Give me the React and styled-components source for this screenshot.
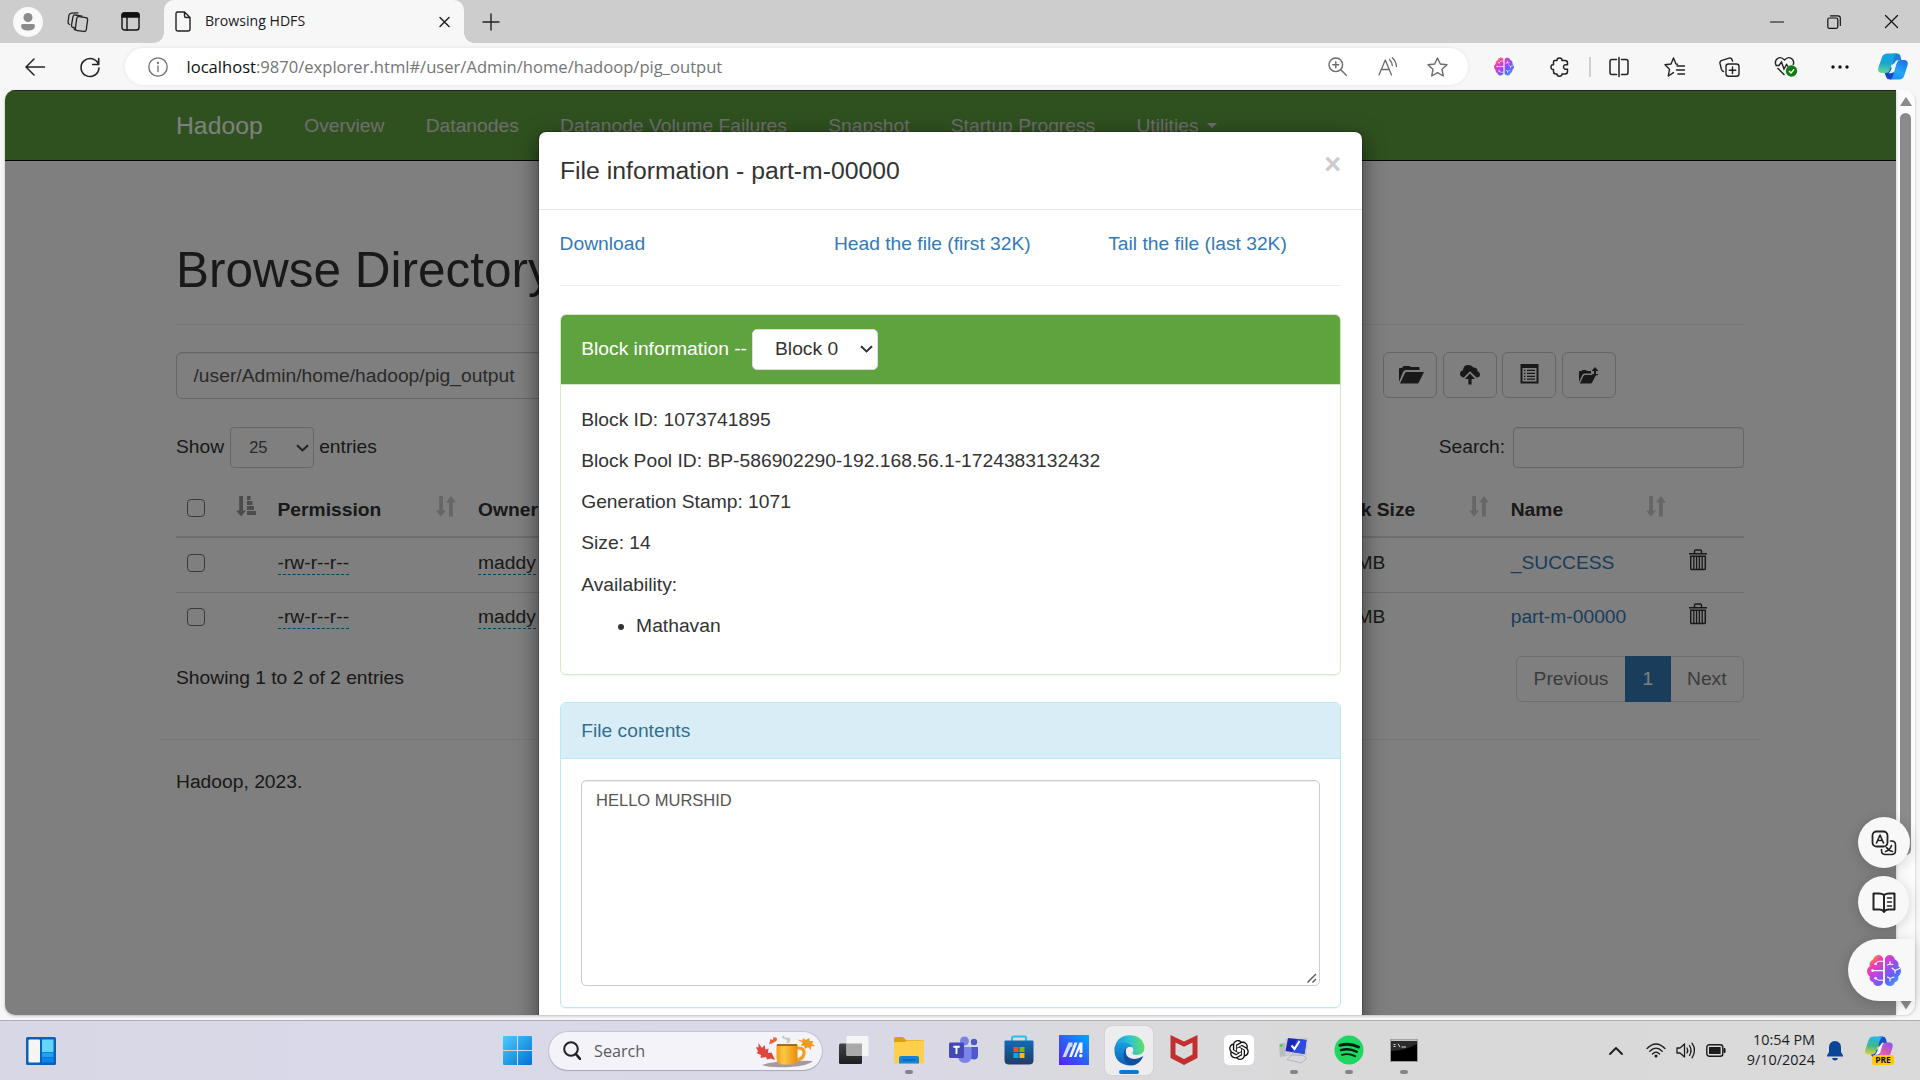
import React from "react";
import styled, { createGlobalStyle, css } from "styled-components";
import { RiOpenaiFill } from "react-icons/ri";

const Global = createGlobalStyle`
  * { box-sizing: border-box; }
  html, body { margin: 0; padding: 0; overflow: hidden; }
  body { font-family: "Liberation Sans", Arial, sans-serif; background: #f7f7f7; }
`;

const ui = css`font-family: "Open Sans", "Noto Sans", sans-serif;`;

const Desktop = styled.div`
  width: 1920px;
  height: 1080px;
  display: flex;
  flex-direction: column;
  background: #f7f7f7;
`;

/* ---------- browser chrome ---------- */
const TabStrip = styled.div`
  height: 43px;
  background: #cdcdcd;
  display: flex;
  align-items: center;
  flex: none;
`;
const Slot = styled.div`
  width: ${(p) => p.$w}px;
  height: 100%;
  flex: none;
  display: flex;
  align-items: center;
  justify-content: center;
  svg { display: block; overflow: visible; }
`;
const Avatar = styled.div`
  width: 30px;
  height: 30px;
  border-radius: 50%;
  background: #f9f9f9;
  display: flex;
  align-items: center;
  justify-content: center;
`;
const Tab = styled.div`
  ${ui}
  width: 300px;
  height: 43px;
  margin-left: 2px;
  padding: 0 9px 0 11px;
  display: flex;
  align-items: center;
  background: #f7f7f7;
  border-radius: 10px 10px 0 0;
  font-size: 14.1px;
  color: #1b1b1b;
  position: relative;
  &::before, &::after {
    content: "";
    position: absolute;
    bottom: 0;
    width: 10px;
    height: 10px;
  }
  &::before { left: -10px; background: radial-gradient(circle at 0 0, transparent 9.5px, #f7f7f7 10px); }
  &::after { right: -10px; background: radial-gradient(circle at 100% 0, transparent 9.5px, #f7f7f7 10px); }
`;
const TabTitle = styled.span`
  margin-left: 14px;
  flex: 1;
  line-height: 20px;
  padding-bottom: 1px;
`;
const Spacer = styled.div`flex: 1;`;

const Toolbar = styled.div`
  height: 47px;
  flex: none;
  display: flex;
  align-items: center;
  padding-left: 8px;
`;
const AddressBar = styled.div`
  ${ui}
  width: 1343px;
  height: 37px;
  margin: 0 8.5px 0 8px;
  padding: 0 6px 0 8px;
  border-radius: 19px;
  background: #fff;
  box-shadow: 0 0 4px rgba(0, 0, 0, 0.08);
  display: flex;
  align-items: center;
`;
const Url = styled.div`
  margin-left: 4.5px;
  flex: 1;
  font-size: 16.58px;
  line-height: 24px;
  color: #757575;
  b { font-weight: 400; color: #101010; }
`;
const ToolDivider = styled.div`
  width: 2px;
  height: 20px;
  margin: 0 1px 0 2px;
  background: #cfcfcf;
`;

/* ---------- web page ---------- */
const PageFrame = styled.div`
  height: 930px;
  flex: none;
  padding: 0 5px 5px;
  display: flex;
  position: relative;
`;
const Page = styled.div`
  width: 1891px;
  height: 925px;
  background: #fff;
  border-radius: 10px 0 0 10px;
  overflow: hidden;
  position: relative;
  color: #333;
  font-size: 19.25px;
  line-height: 27.5px;
  box-shadow: 0 1px 3px rgba(0, 0, 0, 0.25);
`;
const Navbar = styled.nav`
  height: 71px;
  padding: 0 171px;
  background: #5fa33e;
  border-top: 1px solid #4c4c4c;
  border-bottom: 1px solid #080808;
  display: flex;
  align-items: center;
`;
const Brand = styled.div`
  font-size: 24.75px;
  color: #fff;
  padding-right: 41.5px;
`;
const NavLink = styled.div`
  color: #dcdcdc;
  padding-right: 41.25px;
  display: flex;
  align-items: center;
  white-space: nowrap;
`;
const Caret = styled.i`
  margin-left: 8px;
  border: 5.5px solid transparent;
  border-top-color: #dcdcdc;
  border-bottom: 0;
`;
const Main = styled.main`padding: 82px 152px 0 171px;`;
const PageHeader = styled.div`
  border-bottom: 1px solid #eee;
  padding-bottom: 26.5px;
  margin-bottom: 27px;
`;
const H1 = styled.h1`
  margin: 0;
  font-size: 49.5px;
  line-height: 54.5px;
  font-weight: 400;
`;
const Row = styled.div`
  display: flex;
  align-items: center;
`;
const Field = styled.div`
  height: ${(p) => p.$h}px;
  width: ${(p) => p.$w}px;
  padding: 0 16.5px;
  border: 1px solid #ccc;
  border-radius: ${(p) => p.$r || 6}px;
  box-shadow: inset 0 1px 1px rgba(0, 0, 0, 0.075);
  background: #fff;
  color: #555;
  display: flex;
  align-items: center;
`;
const PathRow = styled(Row)`
  justify-content: space-between;
  align-items: flex-start;
  padding-right: 128px;
`;
const Buttons = styled.div`
  display: flex;
  gap: 5.3px;
`;
const IconButton = styled.div`
  width: 54.3px;
  height: 46px;
  border: 1px solid #ccc;
  border-radius: 6px;
  display: flex;
  align-items: center;
  justify-content: center;
`;
const FilterRow = styled(Row)`
  justify-content: space-between;
  margin-top: 28px;
  height: 41px;
`;
const FilterLabel = styled.span`margin-top: -2px;`;
const PageSelect = styled.div`
  width: 84px;
  height: 41px;
  margin: 0 5px 0 6px;
  padding: 0 4px 0 18px;
  border: 1px solid #ccc;
  border-radius: 4px;
  display: flex;
  align-items: center;
  justify-content: space-between;
  font-size: 16.5px;
  color: #555;
`;
const SearchBox = styled(Field)`margin-left: 8px;`;
const TableRow = styled.div`
  display: grid;
  grid-template-columns: 90.5px 200.5px 841px 191.7px 177.3px 67px;
  height: ${(p) => (p.$head ? 70 : 54)}px;
  border-top: ${(p) => (p.$line ? "1px solid #ddd" : "0")};
  border-bottom: ${(p) => (p.$head ? "2px solid #ddd" : "0")};
  font-weight: ${(p) => (p.$head ? 700 : 400)};
  padding-top: ${(p) => (p.$head ? 28 : p.$line ? 10 : 11)}px;
`;
const Cell = styled.div`
  padding: 0 11px;
  display: flex;
  align-items: flex-start;
  justify-content: space-between;
  white-space: nowrap;
  svg { display: block; }
`;
const TrashCell = styled(Cell)`
  justify-content: flex-start;
  padding-left: 12px;
`;
const Check = styled.i`
  width: 18px;
  height: 18px;
  margin-top: ${(p) => (p.$head ? 3 : 5)}px;
  border: 1.5px solid #767676;
  border-radius: 4px;
  background: #fff;
`;
const Editable = styled.span`
  line-height: 23px;
  margin-top: 2px;
  border-bottom: 1px dashed #0088cc;
`;
const Link = styled.span`color: #337ab7;`;
const TableFoot = styled(Row)`
  height: 46px;
  margin-top: 10px;
  justify-content: space-between;
  > span { margin-top: -2px; }
`;
const Pager = styled.div`
  display: flex;
  height: 46px;
  border: 1px solid #ddd;
  border-radius: 6px;
  width: 228px;
`;
const PagerItem = styled.div`
  width: ${(p) => p.$w}px;
  margin: -1px 0;
  display: flex;
  align-items: center;
  justify-content: center;
  color: ${(p) => (p.$active ? "#fff" : "#777")};
  background: ${(p) => (p.$active ? "#337ab7" : "transparent")};
`;
const Footer = styled.footer`
  margin: 37px 135px 0 155px;
  border-top: 1px solid #eee;
  padding: 28px 16px 0;
`;
const Backdrop = styled.div`
  position: absolute;
  inset: 0;
  background: rgba(0, 0, 0, 0.5);
`;

/* ---------- modal ---------- */
const Modal = styled.div`
  position: absolute;
  left: 533px;
  top: 41px;
  width: 825px;
  height: 1000px;
  background: #fff;
  background-clip: padding-box;
  border: 1px solid rgba(0, 0, 0, 0.2);
  border-radius: 8px;
  box-shadow: 0 7px 21px rgba(0, 0, 0, 0.5);
`;
const ModalHeader = styled.div`
  height: 78px;
  padding: 21px 21px 0;
  border-bottom: 1px solid #e5e5e5;
  display: flex;
  justify-content: space-between;
  font-size: 24.75px;
  line-height: 35px;
`;
const Close = styled.span`
  font-size: 28.9px;
  line-height: 29px;
  margin-top: -3px;
  font-weight: 700;
  color: #ccc;
`;
const ModalBody = styled.div`padding: 20px 20.6px;`;
const Links = styled.div`
  display: grid;
  grid-template-columns: 274.3px 274.3px 1fr;
  height: 56px;
  border-bottom: 1px solid #eee;
  color: #337ab7;
`;
const Panel = styled.section`
  margin-top: ${(p) => p.$gap}px;
  height: ${(p) => p.$h}px;
  border: 1px solid ${(p) => p.$line};
  border-radius: 6px;
  box-shadow: 0 1px 1px rgba(0, 0, 0, 0.05);
  overflow: hidden;
`;
const PanelHead = styled.div`
  height: ${(p) => p.$h}px;
  padding: ${(p) => (p.$h > 60 ? "0 20px 1px 20.6px" : "1px 20px 0 20.6px")};
  background: ${(p) => p.$bg};
  color: ${(p) => p.$fg};
  border-bottom: 1px solid ${(p) => p.$line};
  display: flex;
  align-items: center;
`;
const BlockSelect = styled.div`
  width: 126px;
  height: 41px;
  margin-left: 5px;
  padding: 0 4px 0 22px;
  border: 1px solid #ddd;
  border-radius: 5px;
  background: #fff;
  color: #333;
  display: flex;
  align-items: center;
  justify-content: space-between;
`;
const PanelBody = styled.div`
  padding: 20.6px 20px 20px;
  p { margin: 0 0.6px 13.75px; }
  ul { margin: 0; padding-left: 55.5px; }
`;
const TextBox = styled.div`
  height: 206px;
  border: 1px solid #ccc;
  border-radius: 5px;
  box-shadow: inset 0 1px 1px rgba(0, 0, 0, 0.075);
  padding: 6px 2px 2px 14.5px;
  font-size: 16.5px;
  color: #555;
  display: flex;
  justify-content: space-between;
  svg { align-self: flex-end; }
`;

/* ---------- scrollbar and floating buttons ---------- */
const Scrollbar = styled.div`
  width: 19px;
  height: 925px;
  background: #fcfcfc;
  border-radius: 0 11px 11px 0;
  box-shadow: 1px 1px 2px rgba(0, 0, 0, 0.12);
  display: flex;
  flex-direction: column;
  align-items: center;
  padding: 7px 0 5px;
`;
const Thumb = styled.div`
  width: 11px;
  height: 742px;
  margin: 7px 0 auto;
  border-radius: 6px;
  background: #8b8b8b;
`;
const Floating = styled.div`
  position: absolute;
  right: ${(p) => p.$right}px;
  top: ${(p) => p.$top}px;
  width: ${(p) => p.$w}px;
  height: ${(p) => p.$h}px;
  border-radius: ${(p) => (p.$tail ? "31px 0 0 31px" : "50%")};
  padding-left: ${(p) => (p.$tail ? 5 : 0)}px;
  background: #f8f8f9;
  box-shadow: 0 2px 14px rgba(0, 0, 0, 0.18);
  display: flex;
  align-items: center;
  justify-content: center;
`;

/* ---------- taskbar ---------- */
const Taskbar = styled.div`
  ${ui}
  height: 60px;
  flex: none;
  border-top: 1px solid #aeaeb4;
  background: linear-gradient(90deg, #d8d7e5 0, #dad9e9 20%, #d9d8e6 45%, #dadadd 60%, #d9d9d9 72%, #dadada 100%);
  display: flex;
  align-items: center;
`;
const SearchPill = styled.div`
  width: 273px;
  height: 38px;
  margin: 0 4.5px 0 4px;
  padding: 0 7px 0 14px;
  border-radius: 19px;
  background: #f4f3fa;
  box-shadow: 0 0 0 1px rgba(160, 155, 190, 0.35), 0 1px 1px rgba(0, 0, 0, 0.2);
  display: flex;
  align-items: center;
  font-size: 16.2px;
  color: #5a5a5f;
  span { flex: 1; margin-left: 13px; }
`;
const TaskSlot = styled.div`
  width: 55px;
  height: 59px;
  flex: none;
  display: grid;
  grid-template-rows: 49px 4px;
  justify-items: center;
  align-items: center;
  svg { display: block; margin-top: 9px; }
`;
const ActiveTile = styled.div`
  width: 48px;
  height: 49px;
  margin-top: 5px;
  border-radius: 6px;
  background: #ededef;
  box-shadow: 0 0 1px rgba(0, 0, 0, 0.25);
  display: grid;
  grid-template-rows: 44px 4px;
  justify-items: center;
  align-items: center;
  align-self: start;
  svg { margin-top: 4px; }
`;
const Indicator = styled.i`
  width: ${(p) => (p.$active ? 20 : 8)}px;
  height: 4px;
  border-radius: 2px;
  background: ${(p) => (p.$active ? "#0a78d4" : "#858589")};
`;
const Clock = styled.div`
  width: 77px;
  text-align: right;
  font-size: 14.4px;
  line-height: 20px;
  color: #1c1c1c;
  margin-top: -2px;
`;

/* ---------- drawings ---------- */
const Svg = ({ w, h, children, c = "#1f1f1f", sw = 1.4, ...r }) => (
  <svg width={w} height={h} viewBox={`0 0 ${w} ${h}`} fill="none" stroke={c} strokeWidth={sw} strokeLinecap="round" strokeLinejoin="round" {...r}>
    {children}
  </svg>
);
const Chevron = ({ c = "#333", w = 13 }) => (
  <Svg w={w} h={8} c={c} sw={2.1} strokeLinecap="butt" strokeLinejoin="miter"><path d={`M1 1.2 L${w / 2} 6.4 L${w - 1} 1.2`} /></Svg>
);
const Brain = ({ w, h, id }) => (
  <svg width={w} height={h} viewBox="0 0 34 31">
    <defs>
      <linearGradient id={id} x1="0" y1="0" x2="1" y2="1">
        <stop offset="0" stopColor="#ffb000" /><stop offset=".08" stopColor="#ffa21a" /><stop offset=".26" stopColor="#f03cb4" />
        <stop offset=".5" stopColor="#a44bea" /><stop offset=".72" stopColor="#5b62ff" /><stop offset="1" stopColor="#38c4ff" />
      </linearGradient>
    </defs>
    <path fill={`url(#${id})`} d="M16 3.5V27.5Q14.500 31 11 31Q7.200 31 6.200 27.200Q2.200 26.200 2.600 21.500Q0 19.500 0 16Q0 12.800 2.600 11.300Q1.800 6.500 5.800 4.800Q7.500 0 11.500 0Q15 0 16 3.500ZM18 3.500Q19.200 0 22.800 0Q26.600 0 28 4.500Q32.400 6.500 31.400 11.200Q34 12.800 34 16Q34 19.500 31.400 21.500Q31.800 26.200 27.800 27.200Q26.800 31 23 31Q19.200 31 18 27.500Z" />
    <g stroke="#fff" strokeWidth="1.1" fill="none" strokeLinecap="round">
      <path d="M6 15.600H16M9 8.500Q10 6.300 12.500 6.300H16M9 23.500Q10.500 25.300 12.500 25.300H16" />
      <path d="M23 6.500V9L20.500 10M23 9L26 9.500M25 13L28 15.500L32.500 13.500M28 15.500V18M20.500 22L23 23.500L27 22M23 23.500V26" />
    </g>
    <g fill="#fff"><circle cx="5.500" cy="15.600" r="1.300" /><circle cx="8.600" cy="9" r="1.300" /><circle cx="8.600" cy="23.200" r="1.300" /></g>
  </svg>
);
const Copilot = ({ w, h, id, pre }) => (
  <svg width={w} height={h} viewBox="0 0 30 27" preserveAspectRatio="none">
    <defs>
      <linearGradient id={id + "a"} x1=".3" y1="0" x2=".2" y2="1">
        <stop offset="0" stopColor={pre ? "#2bb5ea" : "#14a0e6"} /><stop offset=".5" stopColor={pre ? "#3bb98a" : "#18a8cf"} /><stop offset="1" stopColor={pre ? "#e6d22c" : "#5fdc95"} />
      </linearGradient>
      <linearGradient id={id + "b"} x1=".8" y1="0" x2=".3" y2="1">
        <stop offset="0" stopColor={pre ? "#8c55e8" : "#1f6fe5"} /><stop offset=".6" stopColor={pre ? "#e35bb0" : "#22a8f8"} /><stop offset="1" stopColor={pre ? "#ff8a5c" : "#1c8cf5"} />
      </linearGradient>
    </defs>
    <path d="M15 .5H19Q21.800 .5 22.600 3.500L23.500 7.500H20L14 12Z" fill={pre ? "#1a50c8" : "#1a7fd8"} />
    <path d="M6 18.500L12.500 13L16.500 21Q15.500 26.500 12.500 26.500Q9 26.500 8.200 24Z" fill="#1446cc" />
    <path d="M9.500 .5H19.500Q17 1 16 4.500L12 16.500Q10.800 20 7.500 20H3.500Q-.8 19.500 .4 14.500L4 4Q5.300 .5 9.500 .5Z" fill={`url(#${id}a)`} />
    <path d="M21 26.500H11.500Q14 26 15 22.500L18.500 10.500Q19.500 7 23 7H26.500Q30.500 7.500 29.600 12L26.300 22.500Q25 26.500 21 26.500Z" fill={`url(#${id}b)`} />
    <path d="M16.800 9.500Q17.600 7 20.500 7Q18.800 8 18.200 10.500L15.800 18.500Q15 20.300 12.500 20.300H10.500Q12.300 19 13 16.800Z" fill="#f4f8fb" />
  </svg>
);
const SortIcon = ({ active }) => (
  <svg width="20" height="21" viewBox="0 0 20 21" fill={active ? "#999" : "#ccc"}>
    <path d="M3.200 0H7V14.500H10L5 20.500L0 14.500H3.200Z" />
    {active
      ? <path d="M11 0H14.500V4H11ZM11 5H16.500V9H11ZM11 10H18V14H11ZM11 15H20V19H11Z" />
      : <path d="M13 20.500H16.800V6.500H20L14.900 0L10 6.500H13Z" />}
  </svg>
);
const Trash = () => (
  <svg width="18" height="22" viewBox="0 0 18 22" fill="none" stroke="#333" strokeWidth="1.500">
    <path d="M0 4.800H18M5.500 4V2.200Q5.500 .9 6.800 .9H11.200Q12.500 .9 12.500 2.200V4" />
    <path d="M1.700 7.200H16.300V19.500Q16.300 20.600 15.200 20.600H2.800Q1.700 20.600 1.700 19.500Z" />
    <path d="M4.800 8V20M7.600 8V20M10.400 8V20M13.200 8V20" strokeWidth="1.300" />
  </svg>
);

const PageIcons = {
  folder: (
    <svg width="28" height="18" viewBox="-3 0 28 18" fill="#333"><path d="M0 16V3Q0 2 1 2H3L4 .5Q4.300 0 5 0H10.500Q11.300 0 11.500 1H19.500Q20.500 1 20.500 2V4H7Q5 4 4 6Z" /><path d="M1 17.500L6 7Q6.400 6 7.500 6H25L19.800 16.500Q19.300 17.500 18.300 17.500Z" /></svg>
  ),
  cloud: (
    <svg width="20" height="20" viewBox="0 0 20 20" fill="#333"><path d="M3.800 12.500Q0 12 0 8.800Q0 6 3 5.300Q3.300 0 8.500 0Q12 0 13.500 2.500Q17.500 2.500 17.500 6Q20 7 20 9.500Q20 12.500 16.500 12.500L10 6.200Z" /><path d="M10 8.500L15 14H11.600V19.500H8.400V14H5Z" /></svg>
  ),
  list: (
    <svg width="19" height="22" viewBox="0 0 19 22"><path fillRule="evenodd" fill="#333" d="M.5 0H18.500V19.500H.5ZM2.500 4V17.500H16.500V4Z" /><path stroke="#333" strokeWidth="1.300" d="M4 6.300H5.500M7 6.300H15M4 9.300H5.500M7 9.300H15M4 12.300H5.500M7 12.300H15M4 15.200H5.500M7 15.200H15" /></svg>
  ),
  move: (
    <svg width="20" height="17" viewBox="0 0 20 17" fill="#333"><path d="M0 15V5Q0 4 1 4H2.500L3.500 3H7L8 4H12V6.500H5.500Q4 6.500 3.300 8Z" /><path d="M.8 16.500L4.500 9Q5 8 6 8H17L13 15.700Q12.500 16.500 11.700 16.500Z" /><path d="M16 0L19.500 4H17V7H19V8.300H14L12.500 7H15V4H12.500Z" /></svg>
  ),
};

const DocIcon = () => <Svg w={16} h={21} c="#222"><path d="M2.500 1H9.500L15 6.500V18Q15 20 13 20H3Q1 20 1 18V2.500Q1 1 2.500 1ZM9.500 1V5Q9.500 6.500 11 6.500H15" /></Svg>;

const TaskIcons = {
  view: (
    <svg width="30" height="28" viewBox="0 0 30 28"><defs><linearGradient id="tv" x1="0" y1="0" x2="0" y2="1"><stop offset="0" stopColor="#444" /><stop offset="1" stopColor="#1e1e1e" /></linearGradient></defs><rect x="0" y="7.500" width="23" height="20.500" rx="1.500" fill="url(#tv)" /><rect x="7.500" y="0" width="22" height="20" rx="1.500" fill="#f5f5f5" /><path d="M7.500 7.500H23V20H9Q7.500 20 7.500 18.500Z" fill="#aaa" /></svg>
  ),
  folder: (
    <svg width="30" height="28" viewBox="0 0 30 28"><path d="M0 3Q0 1 2 1H9L12 4H28Q30 4 30 6V12H0Z" fill="#dd9f10" /><path d="M0 7Q0 6 1 6H11L13 4.500H29Q30 4.500 30 6V26Q30 27.500 28.500 27.500H1.500Q0 27.500 0 26Z" fill="#fdcf4b" /><path d="M5 27.500V22Q5 20 7 20H23Q25 20 25 22V27.500Z" fill="#1384d8" /><path d="M8.500 24H21.500" stroke="#0a5ca8" strokeWidth="1.200" /></svg>
  ),
  store: (
    <svg width="30" height="30" viewBox="0 0 30 30"><defs><linearGradient id="st" x1="0" y1="0" x2="0" y2="1"><stop offset="0" stopColor="#0f6cb8" /><stop offset="1" stopColor="#243a66" /></linearGradient></defs><path d="M8 8V3Q8 1.500 9.500 1.500H20.500Q22 1.500 22 3V8" fill="none" stroke="#2bbcf2" strokeWidth="2" /><path d="M.5 6.500Q.5 5.500 1.500 5.500H28.500Q29.500 5.500 29.500 6.500V25Q29.500 29.500 25 29.500H5Q.5 29.500 .5 25Z" fill="url(#st)" /><path d="M9.500 12H14.500V17H9.500Z" fill="#f25022" /><path d="M15.500 12H20.500V17H15.500Z" fill="#7fba00" /><path d="M9.500 18H14.500V23H9.500Z" fill="#00a4ef" /><path d="M15.500 18H20.500V23H15.500Z" fill="#ffb900" /></svg>
  ),
  asus: (
    <svg width="30" height="30" viewBox="0 0 30 30"><defs><linearGradient id="as" x1="0" y1="1" x2="1" y2="0"><stop offset="0" stopColor="#5a1ef5" /><stop offset=".5" stopColor="#2a60f5" /><stop offset="1" stopColor="#00aaff" /></linearGradient></defs><rect width="30" height="30" fill="url(#as)" /><path d="M3.500 22L9.500 7.500H13.500V11.500L11.500 12L7 22Z" fill="#cdd9ff" /><path d="M10 22L15.500 7.500H18.500L12.800 22Z" fill="#eef3ff" /><path d="M14.800 22L20.500 7.500H23.500V18H20.500V14L18 19.500L17.500 22Z" fill="#f2f6ff" /><circle cx="21.800" cy="20.800" r="1.700" fill="#fff" /></svg>
  ),
  mcafee: (
    <svg width="28" height="30" viewBox="0 0 28 30"><path d="M.5 0L14 6.500L27.500 0V23L14 30L.5 23ZM5.500 7.500V19.500L14 24L22.500 19.500V7.500L14 11.800Z" fill="#c1302f" fillRule="evenodd" /></svg>
  ),
  pc: (
    <svg width="30" height="28" viewBox="0 0 30 28"><path d="M0 8L7 6V20L1 21Z" fill="#b9bcc2" /><path d="M1 8.500L3.500 8V10.500L1 11Z" fill="#45d032" /><path d="M6 3L29 1.500L27.500 19.500L6.500 20Z" fill="#c9cbd0" /><path d="M9 2L27.500 4L25.500 18L6.500 15Z" fill="#1c27b5" /><path d="M18 3L27.500 4L25.500 18L13 16Z" fill="#2c4be0" /><path d="M12.500 9.500L15.500 13L20.500 5" stroke="#fff" strokeWidth="2" fill="none" /><path d="M13 19L24 19.500L28 22.500L22 27L8 23.500Z" fill="#d7d8db" stroke="#a5a6aa" strokeWidth=".7" /></svg>
  ),
  spotify: (
    <svg width="30" height="30" viewBox="0 0 30 30"><circle cx="15" cy="15" r="14.500" fill="#1ed760" /><g fill="none" stroke="#0b1a10" strokeLinecap="round"><path d="M6 10.300Q15.500 7.500 24.500 12" strokeWidth="2.900" /><path d="M7 15.200Q15 12.800 22.800 16.700" strokeWidth="2.400" /><path d="M8 19.800Q15 18 21 21.200" strokeWidth="1.900" /></g></svg>
  ),
};

const Teams = () => (
  <svg width="30" height="28" viewBox="0 0 30 28"><circle cx="15.500" cy="5" r="4.500" fill="#7b83eb" /><circle cx="25" cy="6" r="3.200" fill="#5059c9" /><path d="M20 11H29V19.500Q29 23.500 25 23.500Q21 23.500 20 20Z" fill="#5059c9" /><path d="M9 11H22.500V20Q22.500 27 15.800 27Q9.500 27 9 20Z" fill="#7b83eb" /><rect x="0" y="6.500" width="15" height="15.500" rx="1.500" fill="#4349b5" /><path d="M4.300 10.800H10.700M7.500 10.800V18" stroke="#fff" strokeWidth="1.900" /></svg>
);
const Edge = () => (
  <svg width="31" height="31" viewBox="0 0 31 31">
    <defs>
      <linearGradient id="e1" x1="0" y1=".4" x2="1" y2=".3"><stop offset="0" stopColor="#1e97dc" /><stop offset=".5" stopColor="#2cc3d6" /><stop offset="1" stopColor="#66e05a" /></linearGradient>
      <linearGradient id="e2" x1="0" y1="0" x2="0" y2="1"><stop offset="0" stopColor="#1b9de2" /><stop offset="1" stopColor="#0f5db5" /></linearGradient>
    </defs>
    <path d="M.5 14Q2 1 15.500 .3Q29 .5 30.500 12.500Q30.500 20 22.500 20Q18 20 18.500 17.500Q20.500 14.500 17.500 11.500Q12.500 6.500 .5 14Z" fill="url(#e1)" />
    <path d="M.4 15Q.5 7.500 9 7.500Q16 7.500 18.500 12Q12.500 10.500 11.200 16.500Q10.500 25.500 19.500 29.700Q16 31 12 30Q.5 27 .4 15Z" fill="url(#e2)" />
    <path d="M12 13Q10.500 22 17 23.500Q23 25 28.500 21.500Q29.500 21 29 22Q24.500 30.500 17.500 30.500Q10 28.500 9.500 20Q9.500 15.500 12 13Z" fill="#124f9e" />
  </svg>
);
const Mug = () => (
  <svg width="59" height="34" viewBox="0 0 59 34">
    <defs><linearGradient id="mg" x1="0" y1="0" x2="1" y2="0"><stop offset="0" stopColor="#f29a1b" /><stop offset=".35" stopColor="#ffc93f" /><stop offset="1" stopColor="#e98a12" /></linearGradient></defs>
    <path d="M6 31Q20 26 57 27Q52 32 34 33Q14 34 6 31Z" fill="#a79a9e" />
    <path d="M38 14H42Q49 14 48 20Q46.500 26 39 26" fill="none" stroke="#f0a01e" strokeWidth="3.200" />
    <path d="M20.500 10.500H41.500V24Q41.500 30.500 36 30.500H26Q20.500 30.500 20.500 24Z" fill="url(#mg)" />
    <path d="M21 11H41" stroke="#8c4c10" strokeWidth="1.500" />
    <path d="M30 9Q33 6 28.500 5Q24 3.500 28 1Q27 4 31.500 3.500Q36.500 4 33 9Z" fill="#c7c7cc" />
    <path d="M19 26L15.500 18.500L12 19L12.500 14.500L9.500 15.500L8.500 11L6 14L2.500 9L2.500 13.500L0 13L2 17.500L.5 19L5 21L4.500 24L10 23L11 25.500L14.500 24.500Z" fill="#e0473c" />
    <path d="M13 10L14.500 5L17 6L17.500 3L21 4L20.500 7L18.500 8L16 9.500Z" fill="#e8633a" />
    <path d="M41 5.500L46.500 8.500L45 12L48 11.500L49 15L52 13L55 16L55 12.500L59 12L56 9.500L57.500 7L53.500 7L53.500 4L49.500 6L47 4L46.500 6.500Z" fill="#f09a20" />
  </svg>
);

const rows = ["_SUCCESS", "part-m-00000"];

export default function App() {
  return (
    <Desktop>
      <Global />
      <TabStrip>
        <Slot $w={56}>
          <Avatar><svg width="16" height="18" viewBox="0 0 16 18" fill="#8b8b8b"><circle cx="8" cy="4.500" r="4.500" /><path d="M1 12.500Q1 11 2.500 11H13.500Q15 11 15 12.500Q15 17.500 8 17.500Q1 17.500 1 12.500Z" /></svg></Avatar>
        </Slot>
        <Slot $w={42}>
          <Svg w={22} h={21} c="#222" sw={1.3}><rect x="10" y="6" width="11" height="14" rx="2.200" transform="rotate(8 15 13)" /><path d="M7 16.500Q5.300 16 5.500 14.200L7 5.700Q7.500 3.700 9.300 4L16 5.200M3.500 13.500Q1.800 12.700 2 11L3 4.200Q3.500 2.200 5.500 2.100L12 1.800M9 19Q7.500 18 8 16.200" /></Svg>
        </Slot>
        <Slot $w={64}>
          <Svg w={19} h={19} c="#111"><rect x="1" y="1" width="17" height="17" rx="2.500" /><path d="M1 5V3Q1 1 3 1H16Q18 1 18 3V5Z" fill="#111" /><path d="M6 5V18" /></Svg>
        </Slot>
        <Tab>
          <DocIcon />
          <TabTitle>Browsing HDFS</TabTitle>
          <Svg w={20} h={12} c="#222" sw={1.5}><path d="M5 1.500L14 10.500M14 1.500L5 10.500" /></Svg>
        </Tab>
        <Slot $w={53}><Svg w={18} h={18} c="#222"><path d="M9 1V17M1 9H17" /></Svg></Slot>
        <Spacer />
        <Slot $w={57}><Svg w={14} h={2} c="#111" sw={1.2}><path d="M.5 1H13.500" /></Svg></Slot>
        <Slot $w={57}><Svg w={14} h={14} c="#111" sw={1.2}><rect x=".8" y="3" width="10" height="10.300" rx="1.500" /><path d="M3.500 .8H11Q13.300 .8 13.300 3V10.500" /></Svg></Slot>
        <Slot $w={58}><Svg w={13} h={13} c="#111" sw={1.2}><path d="M.5 .5L12.500 12.500M12.500 .5L.5 12.500" /></Svg></Slot>
      </TabStrip>

      <Toolbar>
        <Slot $w={54}><Svg w={20} h={18} c="#222" sw={1.5}><path d="M19.500 9H1M9 1L1 9L9 17" /></Svg></Slot>
        <Slot $w={55}><Svg w={20} h={20} c="#222" sw={1.6}><path d="M18.500 7.500A9 9 0 1 0 19 11M18.700 1.500V7.500H12.700" /></Svg></Slot>
        <AddressBar>
          <Slot $w={49}><Svg w={20} h={20} c="#6e6e6e" sw={1.3}><circle cx="10" cy="10" r="9.200" /><path d="M10 9V14.500" /><circle cx="10" cy="6" r=".5" fill="#6e6e6e" /></Svg></Slot>
          <Url><b>localhost</b>:9870/explorer.html#/user/Admin/home/hadoop/pig_output</Url>
          <Slot $w={50}><Svg w={19} h={19} c="#6b6b6b"><circle cx="7.800" cy="7.800" r="6.800" /><path d="M12.800 12.800L18.300 18.300M7.800 4.800V10.800M4.800 7.800H10.800" /></Svg></Slot>
          <Slot $w={51}><Svg w={20} h={19} c="#6b6b6b" sw={1.3}><path d="M1 18L7.300 3L13.500 18M3.300 12.500H11.200M11.500 2.500Q14 5 14.300 8.500M14.200 .8Q18 4 18.500 9.500" /></Svg></Slot>
          <Slot $w={49}><Svg w={21} h={20} c="#6b6b6b"><path d="M10.500 1L13.300 7L20 7.800L15 12.300L16.300 19L10.500 15.700L4.700 19L6 12.300L1 7.800L7.700 7Z" /></Svg></Slot>
        </AddressBar>
        <Slot $w={55}><Brain w={20} h={19} id="bs" /></Slot>
        <Slot $w={55}><Svg w={19} h={20} c="#222" sw={1.5}><path d="M4.500 3.500H7Q6.800 1 9.500 1Q12.200 1 12 3.500H15Q17.500 3.500 17.500 6V7.800Q13.800 7 13.500 10Q13.800 13 17.500 12.200V14.500Q17.500 17 15 17H12Q12.200 19.200 9.500 19.200Q6.800 19.200 7 17H6Q3.500 17 3.500 14.500V12.500Q1 12.700 1 10Q1 7.500 3.500 7.700V5Q3.500 3.500 4.500 3.500Z" /></Svg></Slot>
        <ToolDivider />
        <Slot $w={55}><Svg w={20} h={20} c="#222" sw={1.5}><path d="M7.500 2.500H3Q1 2.500 1 4.500V15.500Q1 17.500 3 17.500H7.500M12.500 2.500H17Q19 2.500 19 4.500V15.500Q19 17.500 17 17.500H12.500M10 .5V19.500" /></Svg></Slot>
        <Slot $w={55}><Svg w={21} h={20} c="#222" sw={1.5}><path d="M13.500 7.200L12 7L9.500 1L7 7L1 7.800L5.500 12.300L4.300 19L9.500 15.700M13 9H20.500M12.500 13H20.500M14 17H20.500" strokeWidth="1.400" /></Svg></Slot>
        <Slot $w={56}><Svg w={21} h={20} c="#222" sw={1.4}><rect x="7" y="7" width="13" height="12.300" rx="2.500" /><path d="M13.500 10V16.500M10.300 13.200H16.700M4.500 14.500Q3 14 2.500 12.500L1 6.500Q.5 4 3 3.300L10 1.200Q12.500 .5 13.200 3L13.500 4" /></Svg></Slot>
        <Slot $w={56}><svg width="24" height="21" viewBox="0 0 24 21" fill="none" stroke="#222" strokeWidth="1.400"><path d="M2 9Q.5 6 2.500 3.500Q6-.5 10.500 4Q15-.5 18.500 3.500Q20.500 6 19 9M3.500 12L10.500 19M1.500 9.500H5L7.500 6L10 13L12.500 8.500L14 10.500" /><circle cx="17.500" cy="15" r="5.700" fill="#107c10" stroke="none" /><path d="M15 15L17 17L20.200 13.300" stroke="#fff" /></svg></Slot>
        <Slot $w={53}><svg width="18" height="4" viewBox="0 0 18 4" fill="#111"><circle cx="2" cy="2" r="1.700" /><circle cx="9" cy="2" r="1.700" /><circle cx="16" cy="2" r="1.700" /></svg></Slot>
        <Slot $w={53}><Copilot w={30} h={27} id="cp" /></Slot>
      </Toolbar>

      <PageFrame>
        <Page>
          <Navbar>
            <Brand>Hadoop</Brand>
            <NavLink>Overview</NavLink>
            <NavLink>Datanodes</NavLink>
            <NavLink>Datanode Volume Failures</NavLink>
            <NavLink>Snapshot</NavLink>
            <NavLink>Startup Progress</NavLink>
            <NavLink>Utilities <Caret /></NavLink>
          </Navbar>
          <Main>
            <PageHeader><H1>Browse Directory</H1></PageHeader>
            <PathRow>
              <Field $h={47} $w={1150}>/user/Admin/home/hadoop/pig_output</Field>
              <Buttons>
                {Object.entries(PageIcons).map(([k, icon]) => <IconButton key={k}>{icon}</IconButton>)}
              </Buttons>
            </PathRow>
            <FilterRow>
              <Row><FilterLabel>Show</FilterLabel><PageSelect>25 <Chevron c="#444" /></PageSelect><FilterLabel>entries</FilterLabel></Row>
              <Row><FilterLabel>Search:</FilterLabel><SearchBox $h={41} $w={231} $r={4} /></Row>
            </FilterRow>
            <TableRow $head>
              <Cell><Check $head /><SortIcon active /></Cell>
              <Cell>Permission <SortIcon /></Cell>
              <Cell>Owner</Cell>
              <Cell>Block Size <SortIcon /></Cell>
              <Cell>Name <SortIcon /></Cell>
              <Cell />
            </TableRow>
            {rows.map((name, i) => (
              <TableRow key={name} $line={i > 0}>
                <Cell><Check /></Cell>
                <Cell><Editable>-rw-r--r--</Editable></Cell>
                <Cell><Editable>maddy</Editable></Cell>
                <Cell>128 MB</Cell>
                <Cell><Link>{name}</Link></Cell>
                <TrashCell><Trash /></TrashCell>
              </TableRow>
            ))}
            <TableFoot>
              <span>Showing 1 to 2 of 2 entries</span>
              <Pager>
                <PagerItem $w={109}>Previous</PagerItem>
                <PagerItem $w={46} $active>1</PagerItem>
                <PagerItem $w={73}>Next</PagerItem>
              </Pager>
            </TableFoot>
          </Main>
          <Footer>Hadoop, 2023.</Footer>
          <Backdrop />
          <Modal>
            <ModalHeader>File information - part-m-00000<Close>×</Close></ModalHeader>
            <ModalBody>
              <Links><span>Download</span><span>Head the file (first 32K)</span><span>Tail the file (last 32K)</span></Links>
              <Panel $gap={28} $h={361} $line="#d6e9c6">
                <PanelHead $h={70} $bg="#5fa33e" $fg="#fff" $line="#d6e9c6">
                  Block information --
                  <BlockSelect>Block 0 <Chevron /></BlockSelect>
                </PanelHead>
                <PanelBody>
                  <p>Block ID: 1073741895</p>
                  <p>Block Pool ID: BP-586902290-192.168.56.1-1724383132432</p>
                  <p>Generation Stamp: 1071</p>
                  <p>Size: 14</p>
                  <p>Availability:</p>
                  <ul><li>Mathavan</li></ul>
                </PanelBody>
              </Panel>
              <Panel $gap={27} $h={306} $line="#bce8f1">
                <PanelHead $h={56} $bg="#d9edf7" $fg="#31708f" $line="#bce8f1">File contents</PanelHead>
                <PanelBody>
                  <TextBox>
                    HELLO MURSHID
                    <svg width="10" height="10" viewBox="0 0 10 10" stroke="#555" strokeWidth="1.400"><path d="M.5 9.500L9 1M5.500 9.500L9 6" /></svg>
                  </TextBox>
                </PanelBody>
              </Panel>
            </ModalBody>
          </Modal>
        </Page>
        <Scrollbar>
          <svg width="12" height="9" viewBox="0 0 12 9"><path d="M6 0.500L11.500 9H.5Z" fill="#8b8b8b" stroke="#8b8b8b" strokeLinejoin="round" /></svg>
          <Thumb />
          <svg width="12" height="9" viewBox="0 0 12 9"><path d="M6 8.500L11.500 0H.5Z" fill="#8b8b8b" /></svg>
        </Scrollbar>
        <Floating $right={10} $top={727} $w={52} $h={51}>
          <Svg w={26} h={26} c="#222" sw={1.800}><rect x="1.500" y="1.500" width="15" height="15" rx="4" /><path d="M5.500 13L9 5L12.500 13M6.700 10.500H11.300M19.500 11H20.500Q24.500 11 24.500 15V20.500Q24.500 24.500 20.500 24.500H14.500Q10.500 24.500 10.500 20.500V19.500M14.500 21.500Q19 20 20.500 15.500M15.500 17.500Q18 21 21.500 21.500" strokeWidth="1.600" /></Svg>
        </Floating>
        <Floating $right={11} $top={786} $w={51} $h={52}>
          <Svg w={24} h={21} c="#222" sw={2}><path d="M12 3Q10 1.500 7 1.500H1.500V17.500H8Q10.500 17.500 12 20Q13.500 17.500 16 17.500H22.500V1.500H17Q14 1.500 12 3ZM12 3V18" /><path d="M15.500 6H19.500M15.500 10H19.500M15.500 14H19.500" strokeWidth="1.500" /></Svg>
        </Floating>
        <Floating $right={5} $top={849} $w={67} $h={62} $tail><Brain w={34} h={31} id="bl" /></Floating>
      </PageFrame>

      <Taskbar>
        <Slot $w={82}>
          <svg width="30" height="28" viewBox="0 0 30 28"><rect width="30" height="28" rx="1.500" fill="#0a62b8" /><rect x="2.500" y="2.500" width="11.500" height="23" rx="1" fill="#f5f5f5" /><rect x="16" y="2.500" width="11.500" height="12.500" fill="#63d5fc" /><path d="M16 15.500H27.500V20H16Z" fill="#1ea0f5" /><path d="M16 20.500H27.500V25.500H16Z" fill="#0a84ee" /></svg>
        </Slot>
        <Slot $w={408} />
        <Slot $w={55}>
          <svg width="29" height="29" viewBox="0 0 29 29"><defs><linearGradient id="wn" x1="0" y1="0" x2="1" y2="1"><stop offset="0" stopColor="#4ccbff" /><stop offset="1" stopColor="#0072d2" /></linearGradient></defs><path fill="url(#wn)" d="M0 1Q0 0 1 0H14V14H0ZM15 0H28Q29 0 29 1V14H15ZM0 15H14V29H1Q0 29 0 28ZM15 15H29V28Q29 29 28 29H15Z" /></svg>
        </Slot>
        <SearchPill>
          <Svg w={18} h={19} c="#222" sw={2}><circle cx="8" cy="8" r="6.800" /><path d="M12.800 13L17 17.800" strokeWidth="2.600" /></Svg>
          <span>Search</span>
          <Mug />
        </SearchPill>
        <TaskSlot>{TaskIcons.view}</TaskSlot>
        <TaskSlot>{TaskIcons.folder}<Indicator /></TaskSlot>
        <TaskSlot><Teams /></TaskSlot>
        <TaskSlot>{TaskIcons.store}</TaskSlot>
        <TaskSlot>{TaskIcons.asus}</TaskSlot>
        <TaskSlot><ActiveTile><Edge /><Indicator $active /></ActiveTile></TaskSlot>
        <TaskSlot>{TaskIcons.mcafee}</TaskSlot>
        <TaskSlot>
          <svg width="30" height="30" viewBox="0 0 30 30"><rect width="30" height="30" rx="5" fill="#fff" /><RiOpenaiFill x="3" y="3" size={24} color="#111" /></svg>
        </TaskSlot>
        <TaskSlot>{TaskIcons.pc}<Indicator /></TaskSlot>
        <TaskSlot>{TaskIcons.spotify}<Indicator /></TaskSlot>
        <TaskSlot>
          <svg width="28" height="23" viewBox="0 0 28 23"><rect x=".5" y=".5" width="27" height="22" fill="#000" stroke="#9a9a9f" /><path d="M1 1.500H27" stroke="#c4c4c8" strokeWidth="1.500" /><path d="M1 12Q14 12 27 5V2H1Z" fill="#2b2b2b" /><path d="M3.500 5.500H5.500M3.500 7.500H5.500M8 4.800L10 8M11.500 8H16" stroke="#ddd" strokeWidth="1" /></svg>
          <Indicator />
        </TaskSlot>
        <Spacer />
        <Slot $w={36}><Svg w={14} h={8} c="#1c1c1c" sw={1.800}><path d="M1 7L7 1L13 7" /></Svg></Slot>
        <Slot $w={44}>
          <Svg w={20} h={15} c="#1c1c1c" sw={1.300}><path d="M1 5.500Q10-3.500 19 5.500M3.800 8.300Q10 2 16.200 8.300M6.500 11Q10 7.300 13.500 11" /><circle cx="10" cy="13" r="1.500" fill="#1c1c1c" stroke="none" /></Svg>
        </Slot>
        <Slot $w={16}>
          <Svg w={20} h={17} c="#1c1c1c" sw={1.300}><path d="M1 6H4L8.500 2V15L4 11H1ZM11 6Q12.500 8.500 11 11M13.500 3.500Q16.500 8.500 13.500 13.500M16 1.200Q21 8.500 16 15.800" /></Svg>
        </Slot>
        <Slot $w={44}>
          <Svg w={20} h={13} c="#1c1c1c" sw={1.400}><rect x=".8" y=".8" width="16" height="11.400" rx="2.500" /><rect x="3" y="3" width="11.600" height="7" fill="#1c1c1c" stroke="none" /><path d="M18.500 5V8" strokeWidth="2.200" /></Svg>
        </Slot>
        <Clock>10:54 PM<br />9/10/2024</Clock>
        <Slot $w={40}>
          <svg width="16" height="20" viewBox="0 0 16 20" fill="#0b4597"><path d="M8 0Q14 .5 14 6.500V11L16 14.500V15.500H0V14.500L2 11V6.500Q2 .5 8 0ZM5 17H11Q10.500 19.500 8 19.500Q5.500 19.500 5 17Z" /></svg>
        </Slot>
        <Slot $w={50}>
          <svg width="30" height="29" viewBox="0 0 30 29"><Copilot w={28} h={25} id="cq" pre /><rect x="7" y="19" width="22" height="10" rx="3" fill="#ffc800" /><text x="18" y="27" fontFamily="Open Sans" fontWeight="700" fontSize="8.500" textAnchor="middle" fill="#111">PRE</text></svg>
        </Slot>
        <Slot $w={15} />
      </Taskbar>
    </Desktop>
  );
}
